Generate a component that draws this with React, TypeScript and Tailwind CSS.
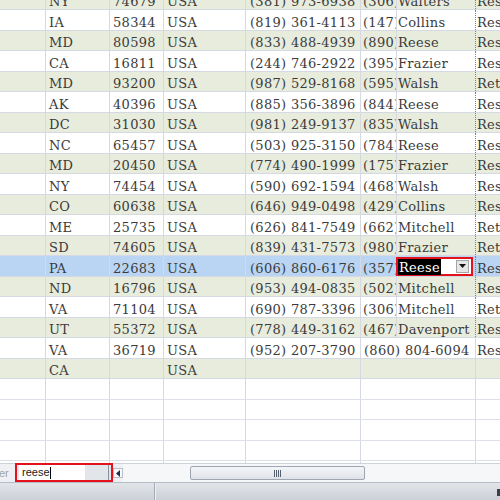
import React from "react";

type Row = [string, string, string, string, string, string, string];

const rows: Row[] = [
  ["NY", "74679", "USA", "(381) 973-6938", "(306)", "Walters", "Res"],
  ["IA", "58344", "USA", "(819) 361-4113", "(147)", "Collins", "Res"],
  ["MD", "80598", "USA", "(833) 488-4939", "(890)", "Reese", "Res"],
  ["CA", "16811", "USA", "(244) 746-2922", "(395)", "Frazier", "Res"],
  ["MD", "93200", "USA", "(987) 529-8168", "(595)", "Walsh", "Ret"],
  ["AK", "40396", "USA", "(885) 356-3896", "(844)", "Reese", "Res"],
  ["DC", "31030", "USA", "(981) 249-9137", "(835)", "Walsh", "Res"],
  ["NC", "65457", "USA", "(503) 925-3150", "(784)", "Reese", "Res"],
  ["MD", "20450", "USA", "(774) 490-1999", "(175)", "Frazier", "Res"],
  ["NY", "74454", "USA", "(590) 692-1594", "(468)", "Walsh", "Res"],
  ["CO", "60638", "USA", "(646) 949-0498", "(429)", "Collins", "Res"],
  ["ME", "25735", "USA", "(626) 841-7549", "(662)", "Mitchell", "Ret"],
  ["SD", "74605", "USA", "(839) 431-7573", "(980)", "Frazier", "Ret"],
  ["PA", "22683", "USA", "(606) 860-6176", "(357)", "Reese", "Res"],
  ["ND", "16796", "USA", "(953) 494-0835", "(502)", "Mitchell", "Res"],
  ["VA", "71104", "USA", "(690) 787-3396", "(306)", "Mitchell", "Ret"],
  ["UT", "55372", "USA", "(778) 449-3162", "(467)", "Davenport", "Res"],
  ["VA", "36719", "USA", "(952) 207-3790", "(860) 804-6094", "", "Res"],
  ["CA", "", "USA", "", "", "", ""],
];

const cell =
  "flex items-end overflow-hidden whitespace-nowrap leading-[15px] border-r border-[#d5d9e3]";

function DataRow({ r, i }: { r: Row; i: number }) {
  const selected = i === 13;
  const bg = selected ? "bg-[#bad5f3]" : i % 2 === 0 ? "bg-[#e8ecdd]" : "bg-white";
  const merged = r[5] === "";
  return (
    <div
      className={`grid grid-cols-[46px_64px_54px_82px_115px_36px_79px_1fr] h-[20.5px] border-b border-[#d5d9e3] ${bg}`}
    >
      <div className={cell}></div>
      <div className={`${cell} pl-[3px]`}>{r[0]}</div>
      <div className={`${cell} pl-[3px]`}>{r[1]}</div>
      <div className={`${cell} pl-[3px]`}>{r[2]}</div>
      <div className={`${cell} pl-[4px]`}>{r[3]}</div>
      {merged ? (
        <div className={`${cell} col-span-2 pl-[3px]`}>{r[4]}</div>
      ) : (
        <>
          <div className={`${cell} pl-[2px]`}>{r[4]}</div>
          {selected ? (
            <div className="relative flex items-end leading-[15px] border-r border-dotted border-[#7b72d4]">
              <div className="absolute left-[-1px] top-[0.5px] w-[77px] h-[19px] border-2 border-[#e3121c] flex bg-white">
                <div className="w-[43px] bg-black text-white flex items-end pl-[1px] leading-[15px] -mb-[1px]">
                  Reese
                </div>
                <div className="w-[15px]"></div>
                <div className="w-[13px] my-[1px] bg-[#e6e6e6] border border-[#a5a5a5] flex items-center justify-center">
                  <svg width="7" height="4" viewBox="0 0 7 4">
                    <path d="M0 0 L7 0 L3.5 4 Z" fill="#111" />
                  </svg>
                </div>
              </div>
            </div>
          ) : (
            <div className="flex items-end overflow-hidden whitespace-nowrap leading-[15px] pl-[1px] border-r border-dotted border-[#7b72d4]">
              {r[5]}
            </div>
          )}
        </>
      )}
      <div className="flex items-end overflow-hidden whitespace-nowrap leading-[15px] pl-[1px]">
        {r[6]}
      </div>
    </div>
  );
}

function EmptyRow() {
  return (
    <div className="grid grid-cols-[46px_64px_54px_82px_115px_36px_79px_1fr] h-[20.5px] border-b border-[#dde0e8] bg-white">
      <div className={cell}></div>
      <div className={cell}></div>
      <div className={cell}></div>
      <div className={cell}></div>
      <div className={cell}></div>
      <div className={`${cell} col-span-2`}></div>
      <div></div>
    </div>
  );
}

export default function App() {
  return (
    <div className="w-[500px] h-[500px] overflow-hidden flex flex-col bg-white">
      <div
        className="h-[463px] overflow-hidden text-[13px] tracking-[0.3px] text-[#3b3b3b]"
        style={{ fontFamily: '"DejaVu Serif", serif' }}
      >
        <div className="-mt-[10.5px]">
          {rows.map((r, i) => (
            <DataRow key={i} r={r} i={i} />
          ))}
          {[0, 1, 2, 3, 4].map((k) => (
            <EmptyRow key={k} />
          ))}
        </div>
      </div>

      <div
        className="h-[19px] flex items-stretch bg-[#eef0f3] border-t border-[#cdd2da] text-[11px]"
        style={{ fontFamily: '"Liberation Sans", Arial, sans-serif' }}
      >
        <div className="w-[15px] flex items-center text-[#a3a3a3] overflow-hidden">
          <span className="-ml-[1px]">er</span>
        </div>
        <div className="w-[98px] border-2 border-[#e3121c] bg-[#e2e5e9] flex items-stretch -mt-[1px]">
          <div className="ml-[2px] w-[66px] bg-white flex items-center pl-[3px] text-[#1a1a1a]">
            <span>reese</span>
            <span className="w-[1px] h-[12px] bg-black"></span>
          </div>
          <div className="flex-1"></div>
          <div className="w-[1px] bg-[#8a929e] mr-[2px]"></div>
        </div>
        <div className="w-[10px] my-[4px] border border-[#b9c0c9] bg-[#f7f8fa] flex items-center justify-center">
          <svg width="4" height="7" viewBox="0 0 4 7">
            <path d="M4 0 L4 7 L0 3.5 Z" fill="#1e2f52" />
          </svg>
        </div>
        <div className="flex-1 flex items-center bg-[#f6f7f9] pl-[67px]">
          <div className="w-[175px] h-[14px] rounded-[2px] border border-[#9ea6b2] bg-gradient-to-b from-[#f4f5f7] to-[#dfe2e7] flex items-center justify-center">
            <div className="flex gap-[1px] h-[7px]">
              <div className="w-[1px] bg-[#55606e]"></div>
              <div className="w-[1px] bg-[#55606e]"></div>
              <div className="w-[1px] bg-[#55606e]"></div>
              <div className="w-[1px] bg-[#55606e]"></div>
            </div>
          </div>
        </div>
      </div>

      <div className="h-[18px] flex bg-gradient-to-b from-[#e2e5e9] to-[#cbd0d7] border-t border-[#b5bcc6]">
        <div className="w-[154px]"></div>
        <div className="w-[1px] bg-[#a4abb6]"></div>
        <div className="w-[1px] bg-[#eef0f3]"></div>
        <div className="flex-1 flex justify-end items-start pt-[6px]">
          <div className="w-[3px] h-[7px] bg-[#3a3f48]"></div>
        </div>
      </div>
    </div>
  );
}
